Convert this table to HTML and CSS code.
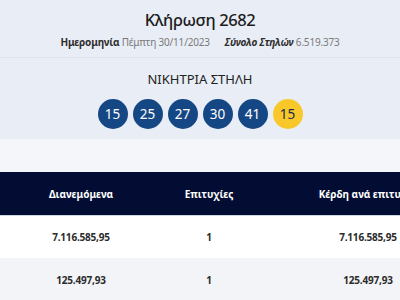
FILE: index.html
```html
<!DOCTYPE html>
<html lang="el">
<head>
<meta charset="utf-8">
<link rel="stylesheet" href="styles.css">
</head>
<body>
<div class="page">
  <header class="draw-head">
    <h1 class="draw-title">Κλήρωση 2682</h1>
    <p class="draw-meta">
      <span class="meta-item"><b>Ημερομηνία</b> Πέμπτη 30/11/2023</span>
      <span class="meta-item"><b class="italic">Σύνολο Στηλών</b> 6.519.373</span>
    </p>
  </header>
  <section class="winning">
    <h2 class="winning-title">ΝΙΚΗΤΡΙΑ ΣΤΗΛΗ</h2>
    <div class="balls">
      <span class="ball">15</span>
      <span class="ball">25</span>
      <span class="ball">27</span>
      <span class="ball">30</span>
      <span class="ball">41</span>
      <span class="ball ball-joker">15</span>
    </div>
  </section>
  <div class="spacer"></div>
  <div class="table">
    <div class="row row-head">
      <div class="cell">Διανεμόμενα</div>
      <div class="cell">Επιτυχίες</div>
      <div class="cell">Κέρδη ανά επιτυχία</div>
    </div>
    <div class="row row-white">
      <div class="cell">7.116.585,95</div>
      <div class="cell">1</div>
      <div class="cell">7.116.585,95</div>
    </div>
    <div class="row row-gray">
      <div class="cell">125.497,93</div>
      <div class="cell">1</div>
      <div class="cell">125.497,93</div>
    </div>
  </div>
</div>
</body>
</html>
```
FILE: styles.css
```css
html, body {
  margin: 0;
  padding: 0;
  width: 400px;
  height: 300px;
  overflow: hidden;
  background: #f5f6fa;
  font-family: "Noto Sans", "Open Sans", sans-serif;
}
.page {
  width: 400px;
  overflow: hidden;
}
.draw-head {
  background: #e9edf5;
  padding: 9px 0 8px;
  border-bottom: 1px solid #dde2ec;
  text-align: center;
}
.draw-title {
  margin: 0;
  font-size: 16.5px;
  line-height: 22px;
  font-weight: 500;
  letter-spacing: -0.4px;
  color: #1c1c1c;
}
.draw-meta {
  margin: 4px 0 0;
  font-size: 10px;
  line-height: 14px;
  letter-spacing: -0.2px;
  color: #7a7a7a;
  display: flex;
  justify-content: center;
  gap: 15px;
}
.draw-meta b {
  color: #2e2e2e;
  font-weight: 700;
}
.italic {
  font-style: italic;
}
.winning {
  background: #e9edf5;
  padding: 13px 0 10px;
  text-align: center;
}
.winning-title {
  margin: 0;
  font-size: 13px;
  line-height: 16px;
  font-weight: 400;
  color: #222;
}
.balls {
  margin-top: 12px;
  display: flex;
  justify-content: center;
  gap: 5px;
}
.ball {
  width: 30px;
  height: 30px;
  border-radius: 50%;
  background: #164785;
  color: #fff;
  font-size: 13.5px;
  line-height: 30px;
  text-align: center;
}
.ball-joker {
  background: #f8c82a;
  color: #1b2a4a;
}
.spacer {
  height: 33px;
  background: #f5f6fa;
}
.table {
  width: 480px;
}
.row {
  display: grid;
  grid-template-columns: 162px 94px 224px;
  align-items: center;
  text-align: center;
}
.row-head {
  height: 43px;
  background: #030d33;
  border-bottom: 1px solid #cfd6e4;
  color: #fff;
  font-size: 10px;
  font-weight: 700;
}
.row-white {
  height: 42px;
  background: #fff;
}
.row-gray {
  height: 43px;
  background: #f3f4f7;
}
.row-white, .row-gray {
  color: #2b2b2b;
  font-size: 10px;
  font-weight: 700;
  letter-spacing: -0.2px;
}
```
